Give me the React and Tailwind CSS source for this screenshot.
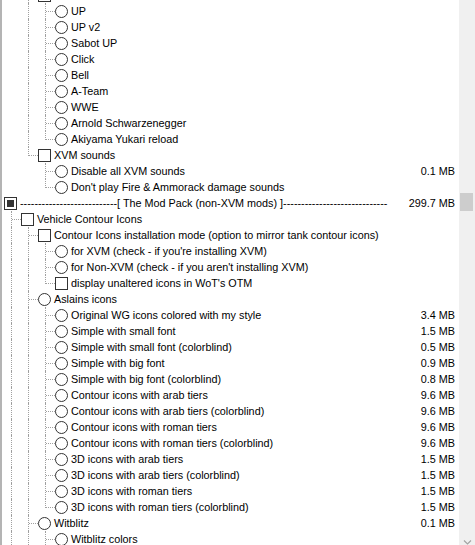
import React from "react";

const L = (lv, type, text, anc, last, size) => ({ lv, type, text, anc, last, size });

const rows = [
  L(2, "cb", "", [false], false),
  L(3, "rb", "UP", [false, true], false),
  L(3, "rb", "UP v2", [false, true], false),
  L(3, "rb", "Sabot UP", [false, true], false),
  L(3, "rb", "Click", [false, true], false),
  L(3, "rb", "Bell", [false, true], false),
  L(3, "rb", "A-Team", [false, true], false),
  L(3, "rb", "WWE", [false, true], false),
  L(3, "rb", "Arnold Schwarzenegger", [false, true], false),
  L(3, "rb", "Akiyama Yukari reload", [false, true], true),
  L(2, "cb", "XVM sounds", [false], true),
  L(3, "rb", "Disable all XVM sounds", [false, false], false, "0.1 MB"),
  L(3, "rb", "Don't play Fire & Ammorack damage sounds", [false, false], true),
  L(
    0,
    "ind",
    "---------------------------[ The Mod Pack (non-XVM mods) ]-----------------------------",
    [],
    true,
    "299.7 MB"
  ),
  L(1, "cb", "Vehicle Contour Icons", [], false),
  L(2, "cb", "Contour Icons installation mode (option to mirror tank contour icons)", [true], false),
  L(3, "rb", "for XVM (check - if you're installing XVM)", [true, true], false),
  L(3, "rb", "for Non-XVM (check - if you aren't installing XVM)", [true, true], false),
  L(3, "cb", "display unaltered icons in WoT's OTM", [true, true], true),
  L(2, "rb", "Aslains icons", [true], false),
  L(3, "rb", "Original WG icons colored with my style", [true, true], false, "3.4 MB"),
  L(3, "rb", "Simple with small font", [true, true], false, "1.5 MB"),
  L(3, "rb", "Simple with small font (colorblind)", [true, true], false, "0.5 MB"),
  L(3, "rb", "Simple with big font", [true, true], false, "0.9 MB"),
  L(3, "rb", "Simple with big font (colorblind)", [true, true], false, "0.8 MB"),
  L(3, "rb", "Contour icons with arab tiers", [true, true], false, "9.6 MB"),
  L(3, "rb", "Contour icons with arab tiers (colorblind)", [true, true], false, "9.6 MB"),
  L(3, "rb", "Contour icons with roman tiers", [true, true], false, "9.6 MB"),
  L(3, "rb", "Contour icons with roman tiers (colorblind)", [true, true], false, "9.6 MB"),
  L(3, "rb", "3D icons with arab tiers", [true, true], false, "1.5 MB"),
  L(3, "rb", "3D icons with arab tiers (colorblind)", [true, true], false, "1.5 MB"),
  L(3, "rb", "3D icons with roman tiers", [true, true], false, "1.5 MB"),
  L(3, "rb", "3D icons with roman tiers (colorblind)", [true, true], true, "1.5 MB"),
  L(2, "rb", "Witblitz", [true], false, "0.1 MB"),
  L(3, "rb", "Witblitz colors", [true, true], false),
];

// one 17px indent column of the tree
function IndentCell({ line, branch, last }) {
  return (
    <div className="relative w-[17px] h-4 shrink-0">
      {line && <span className="absolute left-[7px] top-0 h-4 border-l border-dotted border-[#a0a0a0]" />}
      {branch && (
        <>
          <span
            className={`absolute left-[7px] top-0 border-l border-dotted border-[#a0a0a0] ${
              last ? "h-[9px]" : "h-4"
            }`}
          />
          <span className="absolute left-[8px] top-[8px] w-[9px] border-t border-dotted border-[#a0a0a0]" />
        </>
      )}
    </div>
  );
}

function Mark({ type }) {
  if (type === "rb") {
    return <div className="w-[13px] h-[13px] shrink-0 rounded-full border border-[#333] bg-white" />;
  }
  return (
    <div className="w-[13px] h-[13px] shrink-0 border border-[#333] bg-white flex items-center justify-center">
      {type === "ind" && <div className="w-[7px] h-[7px] bg-[#333]" />}
    </div>
  );
}

function Row({ row }) {
  const cells = [];
  for (let k = 1; k <= row.lv; k++) {
    if (k < row.lv) cells.push(<IndentCell key={k} line={row.anc[k - 1]} />);
    else cells.push(<IndentCell key={k} branch last={row.last} />);
  }
  return (
    <div className="flex items-center h-4 pl-[2px] pr-[4px]">
      {cells}
      <Mark type={row.type} />
      <span className="ml-[3px] whitespace-nowrap leading-4">{row.text}</span>
      <span className="ml-auto whitespace-nowrap leading-4">{row.size}</span>
    </div>
  );
}

export default function App() {
  return (
    <div
      className="flex h-[545px] w-[475px] overflow-hidden bg-white text-black text-[10.8px]"
      style={{ fontFamily: '"Liberation Sans", Arial, sans-serif' }}
    >
      <div className="flex-1 min-w-0 border-l-2 border-[#b4b4b4] overflow-hidden">
        <div className="-mt-[13px]">
          {rows.map((r, i) => (
            <Row key={i} row={r} />
          ))}
        </div>
      </div>
      <div className="w-[16px] shrink-0 bg-[#f0f0f0] flex flex-col">
        <div className="mt-[193px] ml-[1px] w-[13px] h-[18px] bg-[#cdcdcd]" />
        <div className="mt-auto flex justify-center pl-[1px]">
          <svg width="9" height="5" viewBox="0 0 9 5">
            <path d="M1 0.5 L4.5 4 L8 0.5" fill="none" stroke="#a3a3a3" strokeWidth="1.2" />
          </svg>
        </div>
      </div>
    </div>
  );
}
